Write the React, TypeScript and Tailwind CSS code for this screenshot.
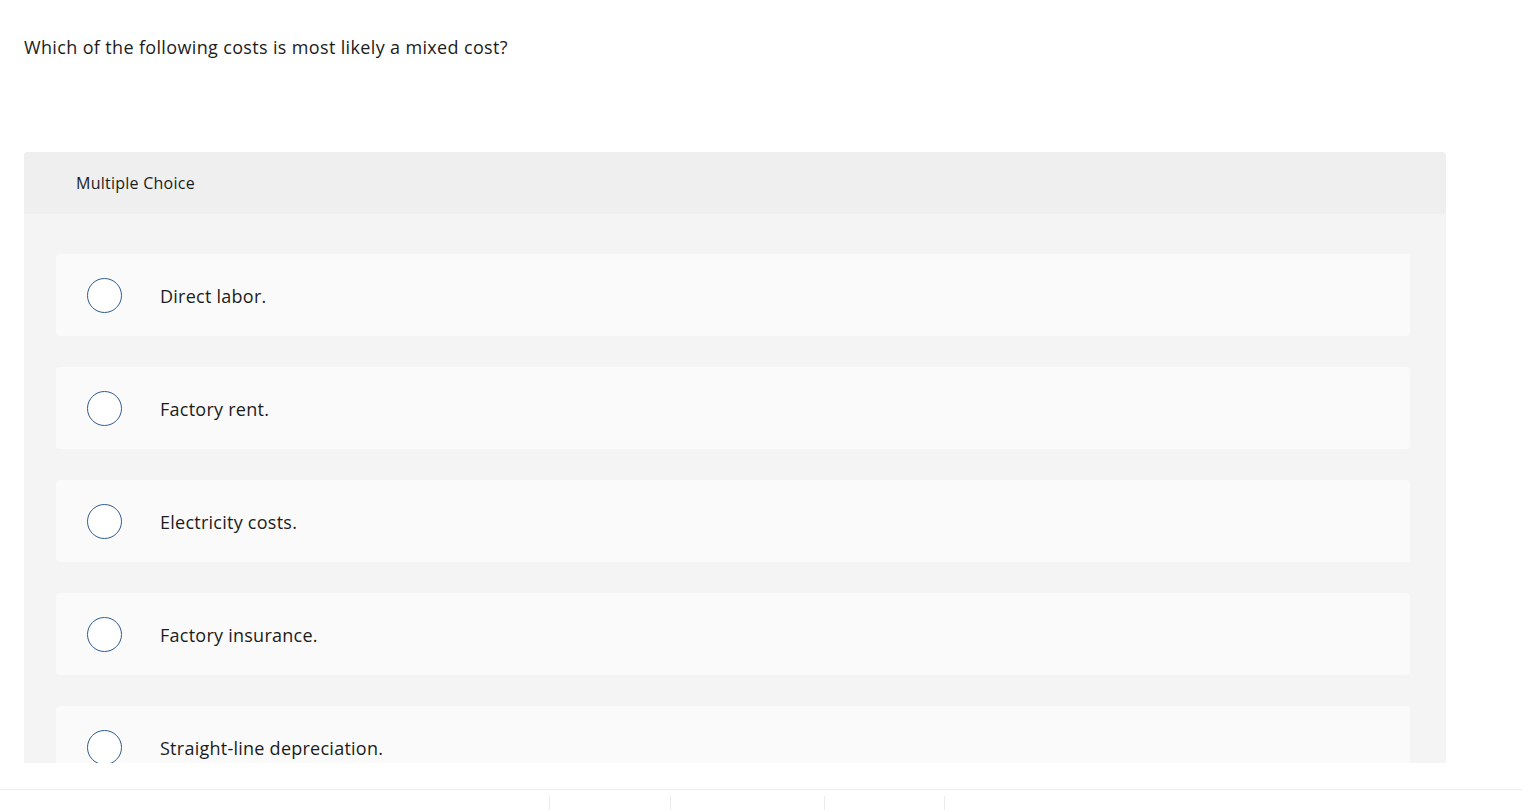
import React from "react";

const options = [
  "Direct labor.",
  "Factory rent.",
  "Electricity costs.",
  "Factory insurance.",
  "Straight-line depreciation.",
];

export default function App() {
  return (
    <div
      className="w-[1522px] h-[810px] overflow-hidden bg-white text-[#1f1f1f]"
      style={{ fontFamily: "'Open Sans', Lato, sans-serif" }}
    >
      <div className="h-[763px] overflow-hidden">
        <div className="px-6 pt-[34px]">
          <p className="text-[18px] leading-[27px] tracking-[0.35px] text-[#1c1c1c]">
            Which of the following costs is most likely a mixed cost?
          </p>
        </div>
        <div className="mt-[91px] ml-6 w-[1422px] rounded-t-[4px] bg-[#f4f4f4]">
          <div className="h-[62px] rounded-t-[4px] bg-[#efefef] pl-[52px] flex items-center">
            <span className="text-[16px] tracking-[0.25px] text-[#1c1c1c] -mt-[1px]">Multiple Choice</span>
          </div>
          <div className="pt-10 pl-8 pr-9 flex flex-col gap-[31px] pb-10">
            {options.map((o) => (
              <div
                key={o}
                className="h-[82px] rounded-[4px] bg-[#fafafa] flex items-center pl-[31px]"
              >
                <span className="w-[35px] h-[35px] rounded-full border-[1.75px] border-[#2e5c8c] bg-white shrink-0" />
                <span className="ml-[38px] text-[18px] leading-[27px] tracking-[0.25px] mt-[2px] text-[#1c1c1c]">{o}</span>
              </div>
            ))}
          </div>
        </div>
      </div>
      <div className="h-[26px]" />
      <div className="border-t border-[#ececec] h-[21px] relative flex">
        <div className="ml-[549px] mt-[6px] h-[15px] w-px bg-[#ececec]" />
        <div className="ml-[120px] mt-[6px] h-[15px] w-px bg-[#ececec]" />
        <div className="ml-[153px] mt-[6px] h-[15px] w-px bg-[#ececec]" />
        <div className="ml-[119px] mt-[6px] h-[15px] w-px bg-[#ececec]" />
      </div>
    </div>
  );
}
